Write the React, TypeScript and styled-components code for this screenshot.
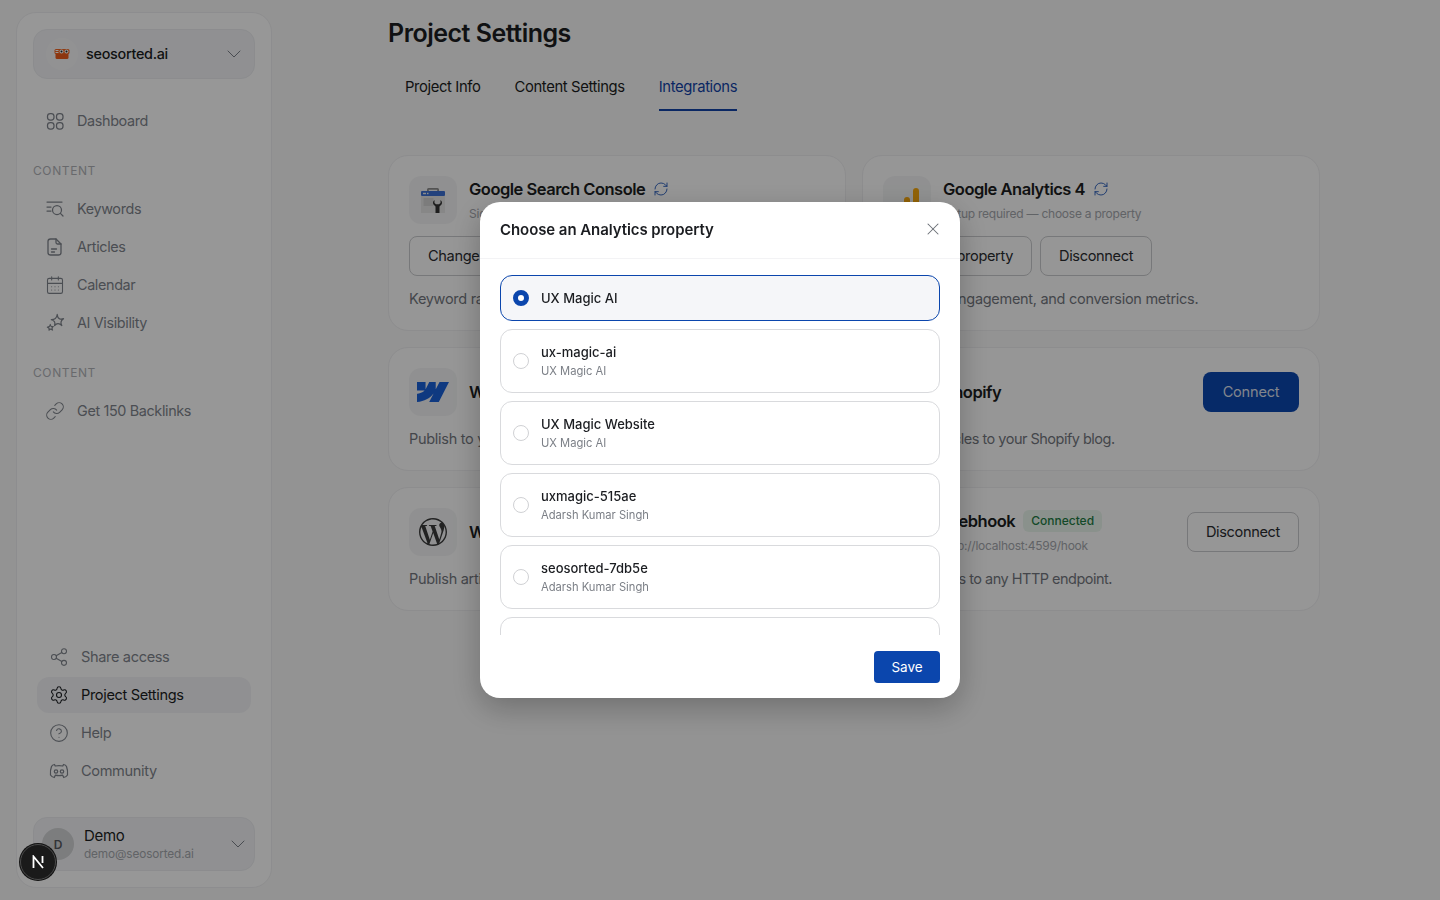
import React from "react";
import styled, { createGlobalStyle } from "styled-components";
import { ChevronDown, CalendarDays, Link, Share2, Settings, CircleHelp, RefreshCw, X } from "lucide-react";
import { SiWebflow, SiWordpress, SiShopify } from "react-icons/si";

const Global = createGlobalStyle`
  html, body { margin: 0; padding: 0; height: 100%; }
  body { background: #f5f5f5; font-family: Inter, "Liberation Sans", sans-serif; color: #1b1d21; overflow: hidden; }
  * { box-sizing: border-box; }
  button { font-family: inherit; }
`;

const Page = styled.div`display: flex; height: 900px; width: 1440px;`;

const Sidebar = styled.aside`
  width: 256px; height: 876px; margin: 12px 0 12px 16px; flex: none;
  background: #fcfcfc; border: 1px solid #ececee; border-radius: 20px;
  padding: 16px; display: flex; flex-direction: column;
`;
const Selector = styled.div`
  height: 50px; flex: none; display: flex; align-items: center; padding: 0 8px 0 12px;
  background: #f0f1f4; border: 1px solid #e9eaed; border-radius: 14px; gap: 8px;
`;
const LogoCircle = styled.div`
  width: 32px; height: 32px; border-radius: 50%; background: #f4f4f5;
  display: flex; align-items: center; justify-content: center; flex: none;
`;
const SelectorName = styled.span`
  flex: 1; font-size: 14.4px; font-weight: 500; letter-spacing: -0.02em; color: #1b1d21; margin-top: -1px;
`;
const Chevron = styled(ChevronDown)`color: #7a7f87; flex: none;`;
const NavTop = styled.div`margin-top: 23px; display: flex; flex-direction: column;`;
const SectionLabel = styled.div`
  height: 16px; line-height: 16px; margin: 23px 0 11px; font-size: 12px; font-weight: 400;
  letter-spacing: 0.05em; color: #aeb0b5; text-transform: uppercase;
`;
const NavItem = styled.div`
  height: 38px; display: flex; align-items: center; gap: 12px; padding-left: 12px;
  font-size: 14.4px; letter-spacing: -0.025em; color: #7e838b;
  svg { flex: none; }
`;
const NavLabel = styled.span`margin-top: -2px;`;
const NavBottom = styled.div`
  margin: auto 4px 28px; display: flex; flex-direction: column; gap: 2px;
`;
const BottomItem = styled.div<{ $active?: boolean }>`
  height: 36px; display: flex; align-items: center; gap: 12px; padding-left: 12px; border-radius: 12px;
  font-size: 14.6px; letter-spacing: -0.025em;
  color: ${(p) => (p.$active ? "#1b1d21" : "#7e838b")};
  background: ${(p) => (p.$active ? "#f0f1f4" : "transparent")};
  svg { flex: none; }
`;
const UserCard = styled.div`
  height: 54px; flex: none; display: flex; align-items: center; padding: 0 4px 0 8px; gap: 10px;
  background: #f0f1f4; border: 1px solid #e9eaed; border-radius: 14px;
`;
const Avatar = styled.div`
  width: 32px; height: 32px; border-radius: 50%; background: #cfd0d2; color: #55585d; flex: none;
  display: flex; align-items: center; justify-content: center; font-size: 12px; font-weight: 600;
`;
const UserText = styled.div`flex: 1; display: flex; flex-direction: column; gap: 1px;`;
const UserName = styled.div`font-size: 15px; line-height: 18px; letter-spacing: -0.02em; color: #1b1d21;`;
const UserMail = styled.div`font-size: 11.8px; line-height: 16px; letter-spacing: -0.01em; color: #a2a5aa;`;

const Main = styled.main`flex: 1; padding: 18px 120px 0 116px; min-width: 0;`;
const Title = styled.h1`
  margin: 0; font-size: 25px; line-height: 30px; font-weight: 600; letter-spacing: -0.02em; color: #1b1d21;
`;
const Tabs = styled.div`display: flex; margin-top: 28px;`;
const Tab = styled.div<{ $active?: boolean }>`
  margin: 0 17px; padding-bottom: 11px; height: 35px; line-height: 22px; font-size: 14.8px; letter-spacing: -0.025em;
  color: ${(p) => (p.$active ? "#1242a5" : "#1b1d21")};
  border-bottom: 2px solid ${(p) => (p.$active ? "#1242a5" : "transparent")};
`;
const Grid = styled.div`
  margin-top: 44px; display: grid; grid-template-columns: 1fr 1fr; gap: 16px;
`;
const Card = styled.section`
  background: #fafafa; border: 1px solid #ebebed; border-radius: 20px; padding: 20px;
  display: flex; flex-direction: column; gap: 12px; overflow: hidden;
`;
const CardHead = styled.div`display: flex; align-items: center; gap: 12px;`;
const IconBox = styled.div`
  width: 48px; height: 48px; border-radius: 12px; background: #f0f1f2; flex: none;
  display: flex; align-items: center; justify-content: center;
`;
const HeadText = styled.div`flex: 1; min-width: 0; display: flex; flex-direction: column; gap: 4px;`;
const TitleRow = styled.div`display: flex; align-items: center; gap: 8px;`;
const CardTitle = styled.div`
  font-size: 16.5px; line-height: 24px; font-weight: 600; letter-spacing: -0.03em; color: #1b1d21; white-space: nowrap;
`;
const Sync = styled(RefreshCw)`color: #2a5db8; flex: none;`;
const CardSub = styled.div`
  font-size: 12px; line-height: 18px; letter-spacing: -0.02em; color: #a2a5aa; white-space: nowrap;
`;
const Buttons = styled.div`display: flex; gap: 8px;`;
const OutlineBtn = styled.button`
  height: 40px; padding: 0 18px; background: transparent; border: 1px solid #c7c8cb; border-radius: 8px;
  font-size: 14.6px; line-height: 36px; letter-spacing: -0.025em; color: #2a2c30; flex: none; white-space: nowrap;
`;
const PrimaryBtn = styled.button`
  height: 40px; width: 96px; padding: 0; background: #0b46ad; border: 0; border-radius: 8px;
  font-size: 14.6px; line-height: 38px; letter-spacing: -0.015em; color: #d7deea; flex: none;
`;
const Desc = styled.p<{ $tight?: boolean }>`
  margin: 0; font-size: 14.5px; line-height: 22px; color: #72767d; white-space: nowrap;
  letter-spacing: ${(p) => (p.$tight ? "-0.035em" : "-0.02em")};
`;
const Badge = styled.span`
  height: 22px; padding: 0 8px; border-radius: 6px; background: #e6f2e9; color: #1f7a43;
  font-size: 12px; font-weight: 500; line-height: 22px;
`;

const Overlay = styled.div`
  position: fixed; inset: 0; background: rgba(0,0,0,0.4);
  display: flex; align-items: center; justify-content: center;
`;
const Modal = styled.div`
  width: 480px; height: 496px; background: #fff; border-radius: 20px; display: flex; flex-direction: column;
  box-shadow: 0 10px 30px rgba(0,0,0,0.25); overflow: hidden;
`;
const ModalHead = styled.div`
  height: 57px; flex: none; display: flex; align-items: center; justify-content: space-between;
  padding: 0 17px 2px 20px; border-bottom: 1px solid #f3f3f5;
`;
const ModalTitle = styled.div`font-size: 15px; font-weight: 600; letter-spacing: -0.005em; color: #1b1d21;`;
const CloseIcon = styled(X)`color: #6b6f76;`;
const List = styled.div`
  height: 376px; flex: none; overflow: hidden; padding: 16px 20px 0; display: flex; flex-direction: column; gap: 8px;
`;
const Option = styled.div<{ $selected?: boolean }>`
  flex: none; display: flex; align-items: center; gap: 12px; padding: 12px; border-radius: 12px;
  border: 1px solid ${(p) => (p.$selected ? "#0b46ad" : "#d9dadd")};
  background: ${(p) => (p.$selected ? "#f5f6f9" : "#fff")};
`;
const ClippedOption = styled(Option)`height: 64px;`;
const Radio = styled.span<{ $selected?: boolean }>`
  width: 16px; height: 16px; border-radius: 50%; flex: none; background: #fff;
  border: ${(p) => (p.$selected ? "5px solid #0b46ad" : "1px solid #d0d1d4")};
`;
const OptionText = styled.div`display: flex; flex-direction: column;`;
const OptionName = styled.div`font-size: 13px; line-height: 20px; font-weight: 500; color: #1b1d21;`;
const OptionSub = styled.div`font-size: 11.2px; line-height: 18px; color: #7b7f86;`;
const ModalFoot = styled.div`flex: 1; display: flex; justify-content: flex-end; padding: 16px 20px 15px;`;
const SaveBtn = styled.button`
  width: 66px; height: 32px; padding: 0; border: 0; border-radius: 4px; background: #0b46ad; color: #fff;
  font-size: 13.5px; line-height: 32px; font-weight: 400;
`;
const DevBadge = styled.div`
  position: fixed; left: 20px; top: 844px; width: 36px; height: 36px; border-radius: 50%;
  background: #1a1a1a; border: 1px solid #4a4a4a; box-shadow: 0 0 0 1px #111;
  display: flex; align-items: center; justify-content: center;
`;

const ic = { size: 20, strokeWidth: 1.3 };

const GridIcon = () => (
  <svg width="20" height="20" viewBox="0 0 20 20" fill="none" stroke="currentColor" strokeWidth="1.25">
    <rect x="2.500" y="2.500" width="6.500" height="6.500" rx="2.800" /><rect x="11.500" y="2.500" width="6.500" height="6.500" rx="2.800" />
    <rect x="2.500" y="11.500" width="6.500" height="6.500" rx="2.800" /><rect x="11.500" y="11.500" width="6.500" height="6.500" rx="2.800" />
  </svg>
);
const KeywordIcon = () => (
  <svg width="20" height="20" viewBox="0 0 20 20" fill="none" stroke="currentColor" strokeWidth="1.25" strokeLinecap="round">
    <path d="M2 3h15M2 8h4M2 12h4" />
    <circle cx="12" cy="11" r="4.500" /><path d="M15.400 14.400 18 17" />
  </svg>
);
const DocIcon = () => (
  <svg width="20" height="20" viewBox="0 0 20 20" fill="none" stroke="currentColor" strokeWidth="1.3" strokeLinecap="round" strokeLinejoin="round">
    <path d="M5.500 2h5.500l5 5v8.500a2.500 2.500 0 0 1-2.500 2.500h-8A2.500 2.500 0 0 1 3 15.500v-11A2.500 2.500 0 0 1 5.500 2z" />
    <path d="M11 2v3.500a1.500 1.500 0 0 0 1.500 1.500H16" /><path d="M6.500 12h5M6.500 15h3" />
  </svg>
);
const SparkIcon = () => (
  <svg width="20" height="20" viewBox="0 0 20 20" fill="none" stroke="currentColor" strokeWidth="1.25" strokeLinejoin="round" strokeLinecap="round">
    <path d="M12.200 1.500c.2 2.300 1 3.800 2.400 4.300 1.200.4 2.500.3 3.900-.1-1.500 1-2.400 2.100-2.500 3.400-.1 1.100.2 2.200.8 3.400-1.300-1.200-2.600-1.900-3.900-1.800-1.200.1-2.300.8-3.300 1.900.4-1.500.5-2.800-.1-3.800-.6-1-1.700-1.700-3.200-2.200 1.700 0 3-.3 4-1.100.9-.8 1.600-2.200 2-3.900z" />
    <path d="M5.300 11.500c.1 1 .4 1.700 1 2 .6.300 1.200.300 2 .1-.7.500-1.100 1-1.200 1.600-.1.600 0 1.100.4 1.800-.7-.6-1.300-.9-1.900-.9-.6 0-1.100.4-1.600 1 .2-.8.200-1.400 0-1.900-.3-.5-.8-.8-1.600-1.100.8 0 1.400-.1 1.900-.5.500-.4.800-1.100 1-2.100z" />
  </svg>
);
const DiscordIcon = () => (
  <svg width="20" height="20" viewBox="0 0 20 20" fill="none" stroke="currentColor" strokeWidth="1.25" strokeLinecap="round" strokeLinejoin="round">
    <path d="M5.500 3.500C4 3.800 3 4.500 2.500 5.500 1.500 8 1.200 11 1.500 14c.8 1.300 2.300 2.200 3.800 2.500l1-2.300c2.500.7 4.900.7 7.400 0l1 2.300c1.500-.3 3-1.200 3.800-2.500.3-3 0-6-1-8.500-.5-1-1.500-1.700-3-2L13.800 5c-2.500-.4-5.100-.4-7.600 0z" />
    <circle cx="7" cy="10.500" r="1.700" /><circle cx="13" cy="10.500" r="1.700" />
  </svg>
);
const SeoLogo = () => (
  <svg width="16" height="12" viewBox="0 0 16 12">
    <path d="M1.500 5h13v4.500a1.500 1.500 0 0 1-1.500 1.500H3a1.500 1.500 0 0 1-1.500-1.500z" fill="#ea5a1c" />
    <rect x="0.500" y="1" width="15" height="5" rx="1.500" fill="#ef6422" />
    <circle cx="7.500" cy="3.500" r="2" fill="#fff" /><circle cx="12.500" cy="3.500" r="2" fill="#fff" />
    <circle cx="7.500" cy="3.500" r="1" fill="#222" /><circle cx="12.500" cy="3.500" r="1" fill="#222" />
    <rect x="1.500" y="2" width="3" height="1" fill="#fff" /><rect x="1.500" y="4" width="3" height="1" fill="#fff" />
  </svg>
);
const GscLogo = () => (
  <svg width="28" height="30" viewBox="0 0 28 30">
    <path d="M8 6V4.500A1.500 1.500 0 0 1 9.500 3h9A1.500 1.500 0 0 1 20 4.500V6h-1.800V4.800H9.800V6z" fill="#8a8a8a" />
    <rect x="2" y="6" width="24" height="5" rx="1" fill="#3b6fd1" />
    <rect x="2" y="11" width="24" height="17" fill="#e2e2e2" />
    <rect x="4" y="7.800" width="3" height="1.400" fill="#e8e8e8" /><rect x="8" y="7.800" width="1.500" height="1.400" fill="#e8e8e8" />
    <rect x="4.500" y="13" width="10" height="8" fill="#cfcfcf" />
    <path d="M15.500 15c-1.500 1-2 3-1 4.500l2 2V28h4v-6.500l2-2c1-1.500.5-3.500-1-4.500v3l-1.500 1.200h-3L15.500 18z" fill="#333" />
  </svg>
);
const GaLogo = () => (
  <svg width="26" height="26" viewBox="0 0 26 26">
    <rect x="19" y="1" width="6" height="24" rx="3" fill="#f4a60d" />
    <rect x="10" y="10" width="6" height="15" rx="3" fill="#f1a30c" />
    <circle cx="4" cy="21" r="3" fill="#e37400" />
  </svg>
);
const WebhookLogo = () => (
  <svg width="24" height="24" viewBox="0 0 24 24" fill="none" stroke="#555" strokeWidth="1.500">
    <circle cx="12" cy="6" r="3" /><circle cx="6" cy="17" r="3" /><circle cx="18" cy="17" r="3" />
  </svg>
);
const NLogo = () => (
  <svg width="14" height="14" viewBox="0 0 14 14" fill="none" stroke="#fff" strokeWidth="1.800">
    <path d="M2.500 13V1.500L12 13" /><path d="M11.500 1v7" />
  </svg>
);

const options = [
  { name: "ux-magic-ai", sub: "UX Magic AI" },
  { name: "UX Magic Website", sub: "UX Magic AI" },
  { name: "uxmagic-515ae", sub: "Adarsh Kumar Singh" },
  { name: "seosorted-7db5e", sub: "Adarsh Kumar Singh" },
];

export default function App() {
  return (
    <>
      <Global />
      <Page>
        <Sidebar>
          <Selector>
            <LogoCircle><SeoLogo /></LogoCircle>
            <SelectorName>seosorted.ai</SelectorName>
            <Chevron size={24} strokeWidth={1} />
          </Selector>
          <NavTop>
            <NavItem><GridIcon /><NavLabel>Dashboard</NavLabel></NavItem>
            <SectionLabel>Content</SectionLabel>
            <NavItem><KeywordIcon /><NavLabel>Keywords</NavLabel></NavItem>
            <NavItem><DocIcon /><NavLabel>Articles</NavLabel></NavItem>
            <NavItem><CalendarDays {...ic} /><NavLabel>Calendar</NavLabel></NavItem>
            <NavItem><SparkIcon /><NavLabel>AI Visibility</NavLabel></NavItem>
            <SectionLabel>Content</SectionLabel>
            <NavItem><Link {...ic} /><NavLabel>Get 150 Backlinks</NavLabel></NavItem>
          </NavTop>
          <NavBottom>
            <BottomItem><Share2 {...ic} />Share access</BottomItem>
            <BottomItem $active><Settings {...ic} />Project Settings</BottomItem>
            <BottomItem><CircleHelp {...ic} />Help</BottomItem>
            <BottomItem><DiscordIcon />Community</BottomItem>
          </NavBottom>
          <UserCard>
            <Avatar>D</Avatar>
            <UserText>
              <UserName>Demo</UserName>
              <UserMail>demo@seosorted.ai</UserMail>
            </UserText>
            <Chevron size={24} strokeWidth={1} />
          </UserCard>
        </Sidebar>
        <Main>
          <Title>Project Settings</Title>
          <Tabs>
            <Tab>Project Info</Tab>
            <Tab>Content Settings</Tab>
            <Tab $active>Integrations</Tab>
          </Tabs>
          <Grid>
            <Card>
              <CardHead>
                <IconBox><GscLogo /></IconBox>
                <HeadText>
                  <TitleRow><CardTitle>Google Search Console</CardTitle><Sync size={16} strokeWidth={1.4} /></TitleRow>
                  <CardSub>Signed in — choose a property</CardSub>
                </HeadText>
              </CardHead>
              <Buttons><OutlineBtn>Change property</OutlineBtn><OutlineBtn>Disconnect</OutlineBtn></Buttons>
              <Desc>Keyword rankings, clicks, and impressions from Search.</Desc>
            </Card>
            <Card>
              <CardHead>
                <IconBox><GaLogo /></IconBox>
                <HeadText>
                  <TitleRow><CardTitle>Google Analytics 4</CardTitle><Sync size={16} strokeWidth={1.4} /></TitleRow>
                  <CardSub>Setup required — choose a property</CardSub>
                </HeadText>
              </CardHead>
              <Buttons><OutlineBtn>Choose property</OutlineBtn><OutlineBtn>Disconnect</OutlineBtn></Buttons>
              <Desc>Sessions, engagement, and conversion metrics.</Desc>
            </Card>
            <Card>
              <CardHead>
                <IconBox><SiWebflow size={32} color="#1a5fd6" /></IconBox>
                <HeadText><CardTitle>Webflow</CardTitle></HeadText>
                <PrimaryBtn>Connect</PrimaryBtn>
              </CardHead>
              <Desc>Publish to your Webflow site.</Desc>
            </Card>
            <Card>
              <CardHead>
                <IconBox><SiShopify size={26} color="#7ab55c" /></IconBox>
                <HeadText><CardTitle>Shopify</CardTitle></HeadText>
                <PrimaryBtn>Connect</PrimaryBtn>
              </CardHead>
              <Desc $tight>Publish articles to your Shopify blog.</Desc>
            </Card>
            <Card>
              <CardHead>
                <IconBox><SiWordpress size={28} color="#3a3a3a" /></IconBox>
                <HeadText><CardTitle>WordPress</CardTitle></HeadText>
                <PrimaryBtn>Connect</PrimaryBtn>
              </CardHead>
              <Desc>Publish articles to your WordPress site.</Desc>
            </Card>
            <Card>
              <CardHead>
                <IconBox><WebhookLogo /></IconBox>
                <HeadText>
                  <TitleRow><CardTitle>Webhook</CardTitle><Badge>Connected</Badge></TitleRow>
                  <CardSub>http://localhost:4599/hook</CardSub>
                </HeadText>
                <OutlineBtn>Disconnect</OutlineBtn>
              </CardHead>
              <Desc $tight>Send articles to any HTTP endpoint.</Desc>
            </Card>
          </Grid>
        </Main>
      </Page>
      <Overlay>
        <Modal>
          <ModalHead>
            <ModalTitle>Choose an Analytics property</ModalTitle>
            <CloseIcon size={20} strokeWidth={1.25} />
          </ModalHead>
          <List>
            <Option $selected>
              <Radio $selected />
              <OptionText><OptionName>UX Magic AI</OptionName></OptionText>
            </Option>
            {options.map((o) => (
              <Option key={o.name}>
                <Radio />
                <OptionText>
                  <OptionName>{o.name}</OptionName>
                  <OptionSub>{o.sub}</OptionSub>
                </OptionText>
              </Option>
            ))}
            <ClippedOption />
          </List>
          <ModalFoot><SaveBtn>Save</SaveBtn></ModalFoot>
        </Modal>
      </Overlay>
      <DevBadge><NLogo /></DevBadge>
    </>
  );
}
